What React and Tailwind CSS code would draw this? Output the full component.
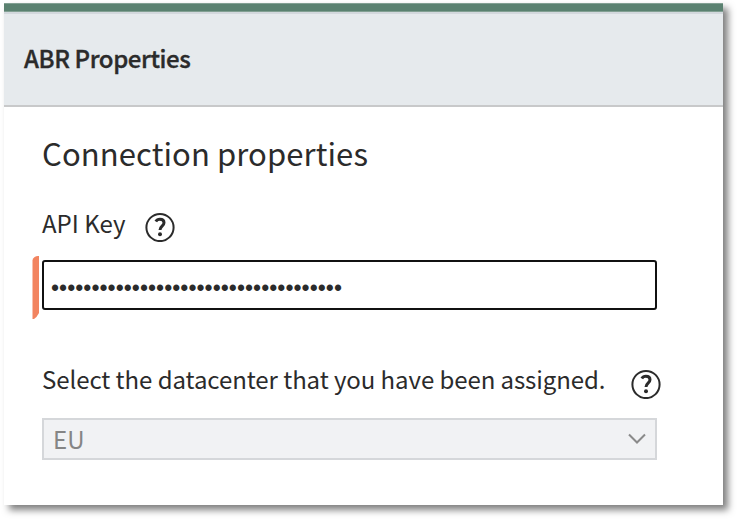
import { useState } from "react";

// Round help icon shown next to a label
function HelpIcon() {
    return (
        <svg className="h-[30px] w-[30px] shrink-0 text-[#2b2b2b]" viewBox="0 0 30 30" fill="none" stroke="currentColor">
            <circle cx="15" cy="15.5" r="13.6" strokeWidth="2" />
            <path d="M10.800 9.400c.9-1.500 2.300-2.200 4.100-2.200 2.500 0 4.100 1.300 4.100 3.600 0 3.400-4 3.500-4 7.200" strokeWidth="3" />
            <circle cx="15" cy="22.300" r="2" fill="currentColor" stroke="none" />
        </svg>
    );
}

function ChevronIcon() {
    return (
        <svg className="h-3 w-[18px]" viewBox="0 0 18 12" fill="none" stroke="#8a8a8a" strokeWidth="2">
            <path d="M1 1.500l8 8 8-8" />
        </svg>
    );
}

function App() {
    const [apiKey, setApiKey] = useState("7c1e5a90-3b2d-4f68-a1c7-9e04d6b8f253");

    return (
        <div className="h-[519px] w-[737px] overflow-hidden bg-white pt-[3px] pl-1 font-['Noto_Sans_CJK_SC',sans-serif] text-[#2b2b2b]">
            <div className="h-[502px] w-[719px] bg-white shadow-[5px_5px_7px_rgba(0,0,0,0.5)]">
                {/* Panel header */}
                <div className="h-[9px] border-y border-[#82a093] bg-[#5a8170]"></div>
                <header className="flex h-[95px] items-center border-t-2 border-b-2 border-t-[#d3d8dd] border-b-[#c8c9ca] bg-[#e6eaed] pb-[3px] pl-5">
                    <h1 className="text-[24px] leading-none font-medium tracking-[-0.4px] [-webkit-text-stroke:0.35px_#2b2b2b]">ABR Properties</h1>
                </header>

                <main className="pl-[38px]">
                    <h2 className="mt-[29px] h-[34px] text-[31px] leading-[34px] tracking-[0.1px] whitespace-nowrap">Connection properties</h2>

                    {/* API key */}
                    <div className="mt-[42px] flex h-[30px]">
                        <label htmlFor="key" className="w-[103px] text-[24px] leading-[22px] whitespace-nowrap">API Key</label>
                        <HelpIcon />
                    </div>
                    <div className="relative mt-[18px] h-[50px] w-[615px]">
                        <svg className="absolute -top-[5px] -left-[10px] h-16 w-[7px]" viewBox="0 0 7 64">
                            <path d="M.5 5Q2 1 6 1h1v57Q5 62 2 64H.5z" fill="#f28460" />
                        </svg>
                        <input
                            id="key"
                            type="password"
                            value={apiKey}
                            onChange={(e) => setApiKey(e.target.value)}
                            className="h-[50px] w-full rounded-[3px] border-2 border-[#111111] bg-white px-[7px] pt-1.5 font-['Liberation_Sans',sans-serif] text-[23px] tracking-[0.03px] outline-none"
                        />
                    </div>

                    {/* Datacenter */}
                    <div className="mt-[59px] flex h-[30px]">
                        <span className="w-[589px] text-[24px] leading-[19px] tracking-[-0.07px] whitespace-nowrap">
                            Select the datacenter that you have been assigned.
                        </span>
                        <HelpIcon />
                    </div>
                    <div className="mt-[19px] flex h-[42px] w-[615px] items-center justify-between border-2 border-[#d5d7da] bg-[#f1f2f4] pr-[9px] pl-[9px] text-[#858585]">
                        <span className="text-[24px] leading-none">EU</span>
                        <ChevronIcon />
                    </div>
                </main>
            </div>
        </div>
    );
}

export default App;
